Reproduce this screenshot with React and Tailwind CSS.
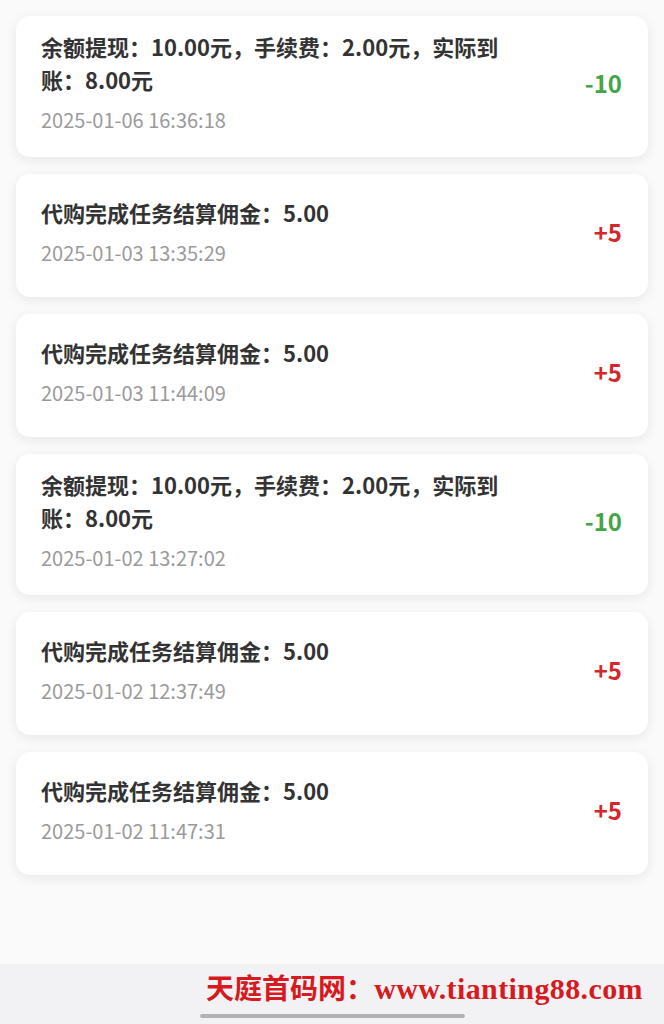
import React from "react";

const records = [
  { title: "余额提现：10.00元，手续费：2.00元，实际到账：8.00元", time: "2025-01-06 16:36:18", amount: "-10" },
  { title: "代购完成任务结算佣金：5.00", time: "2025-01-03 13:35:29", amount: "+5" },
  { title: "代购完成任务结算佣金：5.00", time: "2025-01-03 11:44:09", amount: "+5" },
  { title: "余额提现：10.00元，手续费：2.00元，实际到账：8.00元", time: "2025-01-02 13:27:02", amount: "-10" },
  { title: "代购完成任务结算佣金：5.00", time: "2025-01-02 12:37:49", amount: "+5" },
  { title: "代购完成任务结算佣金：5.00", time: "2025-01-02 11:47:31", amount: "+5" },
];

const RecordCard = ({ title, time, amount }) => {
  const negative = amount.startsWith("-");
  return (
    <div className="flex items-center min-h-[123px] pt-[14px] pb-[21px] pl-[25px] pr-[26px] bg-white rounded-[14px] shadow-[0_3px_12px_rgba(0,0,0,0.08)]">
      <div className="w-[466px]">
        <p className="text-[22px] leading-[33px] font-bold text-[#333333]">{title}</p>
        <p className="mt-2 text-[20px] leading-[32px] text-[#9a9a9a]">{time}</p>
      </div>
      <span
        className={
          negative
            ? "ml-auto text-[24px] font-semibold text-[#43a547]"
            : "ml-auto text-[24px] font-semibold text-[#d5262c]"
        }
      >
        {amount}
      </span>
    </div>
  );
};

const App = () => {
  return (
    <div
      className="flex flex-col h-[1024px] bg-[#fafafa]"
      style={{ fontFamily: '"Noto Sans CJK SC", "Noto Sans", sans-serif' }}
    >
      {/* Balance records */}
      <main className="flex-1 flex flex-col gap-[17px] px-4 pt-4">
        {records.map((r, i) => (
          <RecordCard key={i} {...r} />
        ))}
      </main>

      {/* Footer watermark */}
      <footer className="h-[60px] bg-[#f2f2f5] flex flex-col">
        <div className="flex justify-end items-center h-[50px] pr-[21px]">
          <span
            className="text-[28px] font-bold text-[#d71a20] leading-none"
            style={{ fontFamily: '"Liberation Serif", "Noto Sans CJK SC", serif' }}
          >
            天庭首码网：<span className="text-[30px] tracking-[0.4px]">www.tianting88.com</span>
          </span>
        </div>
        <div className="flex justify-start pl-[200px]">
          <div className="w-[265px] h-[4px] rounded-full bg-[#b3b3b3]" />
        </div>
      </footer>
    </div>
  );
};

export default App;
